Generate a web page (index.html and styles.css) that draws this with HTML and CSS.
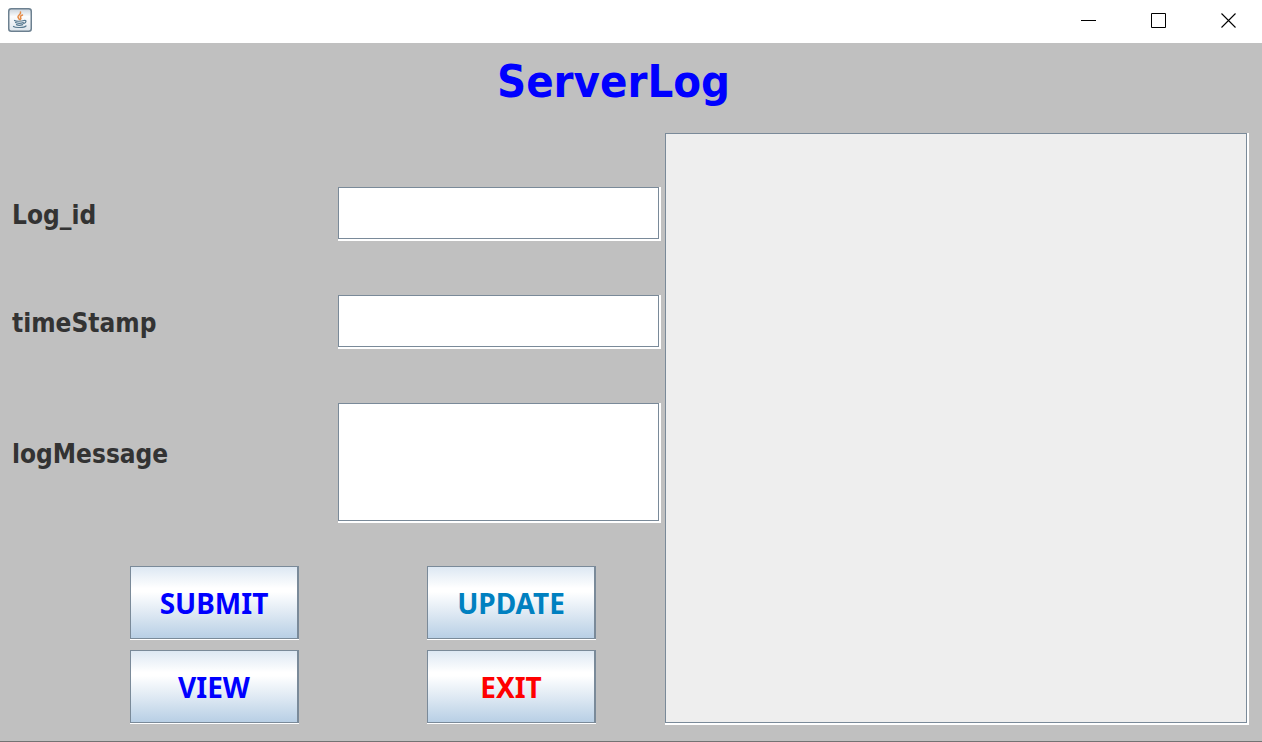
FILE: index.html
```html
<!DOCTYPE html>
<html lang="en">
<head>
<meta charset="utf-8">
<title>ServerLog</title>
<link rel="stylesheet" href="styles.css">
</head>
<body>
<header class="titlebar">
  <svg class="app-icon" viewBox="0 0 24 24" width="24" height="24" aria-hidden="true">
    <defs><linearGradient id="tile" x1="0" y1="0" x2="0" y2="1"><stop offset="0" stop-color="#c9d3dc"/><stop offset=".35" stop-color="#fbfcfd"/><stop offset="1" stop-color="#dde5ec"/></linearGradient></defs>
    <rect x=".75" y=".75" width="22.5" height="22.5" rx="2.5" fill="url(#tile)" stroke="#6c8090" stroke-width="1.500"/>
    <g fill="none" stroke-linecap="round">
      <path d="M12.500 4c1 2.500-3 3.300-2.500 5 .2 1 1.200 1.500 1.300 2.500M14.500 7c-2 .8-2.600 1.600-1.800 2.700.5.800.2 1.400-.5 1.900" stroke="#e58a45" stroke-width="1.500"/>
      <path d="M6.500 12.500c1.500 1 7 1 9.500 0M7.500 14.600c1.500.9 5.500.9 7.800 0M8.500 16.600c1.500.8 4.200.8 6.200 0M16 12.500c2.800-.6 2.500 2-.2 3M5.500 18.500c2 1.500 10.500 1.300 12.500-.5" stroke="#55788f" stroke-width="1.200"/>
    </g>
  </svg>
  <div class="window-controls">
    <button class="window-button" type="button" aria-label="Minimize"><svg width="16" height="16" viewBox="0 0 16 16"><path d="M0 8.500h15" stroke="#000"/></svg></button>
    <button class="window-button" type="button" aria-label="Maximize"><svg width="16" height="16" viewBox="0 0 16 16"><path d="M.5 1.500h14v14h-14z" fill="none" stroke="#000"/></svg></button>
    <button class="window-button" type="button" aria-label="Close"><svg width="16" height="16" viewBox="0 0 16 16"><path d="M.5 1.500l14 14M14.500 1.500l-14 14" stroke="#000" stroke-width="1.100"/></svg></button>
  </div>
</header>
<main class="content">
  <h1 class="heading">ServerLog</h1>
  <div class="columns">
    <form class="form">
      <div class="row">
        <label class="label" for="log-id">Log_id</label>
        <input class="sunken field" id="log-id" type="text">
      </div>
      <div class="row">
        <label class="label" for="timestamp">timeStamp</label>
        <input class="sunken field" id="timestamp" type="text">
      </div>
      <div class="row row-message">
        <label class="label" for="message">logMessage</label>
        <textarea class="sunken field message" id="message"></textarea>
      </div>
      <div class="actions">
        <button class="action" type="button">SUBMIT</button>
        <button class="action update" type="button">UPDATE</button>
        <button class="action" type="button">VIEW</button>
        <button class="action exit" type="button">EXIT</button>
      </div>
    </form>
    <textarea class="sunken output" aria-label="Log output" readonly></textarea>
  </div>
</main>
</body>
</html>
```
FILE: styles.css
```css
* {
  box-sizing: border-box;
}

body {
  display: flex;
  flex-direction: column;
  min-height: 100vh;
  margin: 0;
  background: #c0c0c0;
  color: #333;
  font-family: "DejaVu Sans Condensed", Tahoma, "Noto Sans", sans-serif;
  font-weight: 700;
}

.titlebar {
  display: flex;
  align-items: center;
  justify-content: space-between;
  height: 43px;
  padding: 0 0 4px 8px;
  background: #fff;
}

.window-controls {
  display: flex;
}

.window-button {
  display: grid;
  place-items: center;
  width: 70px;
  height: 36px;
  padding: 0 0 0 3px;
  border: 0;
  background: none;
}

.content {
  display: flex;
  flex: 1;
  flex-direction: column;
  padding: 0 15px 18px 12px;
  border-bottom: 1px solid #737373;
  margin-bottom: 1px;
}

.heading {
  margin: 0;
  padding: 7px 32px 19px 0;
  color: #00f;
  font-size: 45px;
  line-height: 64px;
  text-align: center;
}

.columns {
  display: grid;
  flex: 1;
  grid-template-columns: 647fr 582fr;
  gap: 6px;
}

.form {
  display: flex;
  flex-direction: column;
  gap: 56px;
  padding-top: 54px;
}

.row {
  display: grid;
  grid-template-columns: 326fr 321fr;
  align-items: center;
}

.label {
  padding-top: 4px;
  font-size: 26px;
  line-height: 32px;
}

.row-message .label {
  padding-bottom: 20px;
}

.sunken {
  display: block;
  width: 100%;
  margin: 0;
  padding: 4px;
  border: 1px solid #7a8a99;
  border-radius: 0;
  outline: 0;
  background: #fff;
  box-shadow: 2px 0 #fff, 0 2px #fff, 2px 2px #fff;
  font: inherit;
  resize: none;
}

.field {
  height: 52px;
}

.message {
  height: 118px;
}

.output {
  height: 100%;
  background: #eee;
}

.actions {
  display: grid;
  grid-template-columns: 169fr 169fr;
  gap: 11px 128px;
  margin-top: -11px;
  padding: 0 63px 0 118px;
}

.action {
  height: 73px;
  padding: 0;
  border: 1px solid #7a8a99;
  border-right-width: 2px;
  border-radius: 0;
  background: linear-gradient(#dde8f3, #fff 30%, #fff 35%, #b8cfe5);
  box-shadow: 0 1px #fff;
  color: #00f;
  font-family: "Noto Sans", Tahoma, sans-serif;
  font-size: 28px;
  font-weight: 700;
}

.update {
  color: #0080c0;
}

.exit {
  color: #f00;
}
```
